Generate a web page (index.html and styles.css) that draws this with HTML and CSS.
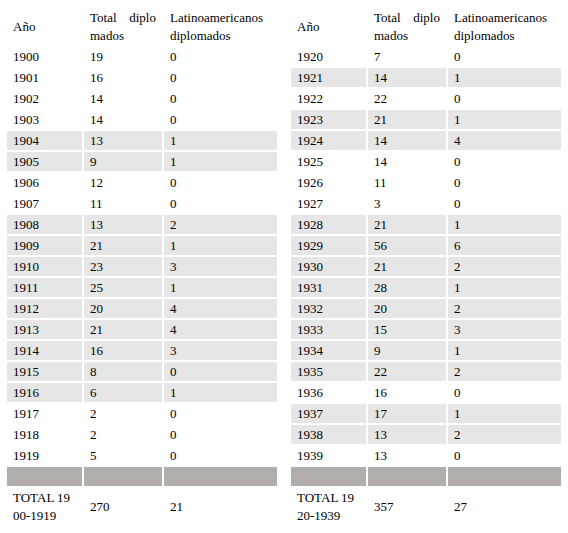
FILE: index.html
```html
<!DOCTYPE html>
<html lang="es">
<head>
<meta charset="utf-8">
<title>Diplomados</title>
<link rel="stylesheet" href="styles.css">
</head>
<body>
<div class="wrap">
  <table class="data">
    <colgroup><col class="c1"><col class="c2"><col class="c3"></colgroup>
    <tr class="head"><td>Año</td><td class="brk">Total diplomados</td><td class="brk">Latinoamericanos diplomados</td></tr>
    <tr><td>1900</td><td>19</td><td>0</td></tr>
    <tr><td>1901</td><td>16</td><td>0</td></tr>
    <tr><td>1902</td><td>14</td><td>0</td></tr>
    <tr><td>1903</td><td>14</td><td>0</td></tr>
    <tr class="shade"><td>1904</td><td>13</td><td>1</td></tr>
    <tr class="shade"><td>1905</td><td>9</td><td>1</td></tr>
    <tr><td>1906</td><td>12</td><td>0</td></tr>
    <tr><td>1907</td><td>11</td><td>0</td></tr>
    <tr class="shade"><td>1908</td><td>13</td><td>2</td></tr>
    <tr class="shade"><td>1909</td><td>21</td><td>1</td></tr>
    <tr class="shade"><td>1910</td><td>23</td><td>3</td></tr>
    <tr class="shade"><td>1911</td><td>25</td><td>1</td></tr>
    <tr class="shade"><td>1912</td><td>20</td><td>4</td></tr>
    <tr class="shade"><td>1913</td><td>21</td><td>4</td></tr>
    <tr class="shade"><td>1914</td><td>16</td><td>3</td></tr>
    <tr class="shade"><td>1915</td><td>8</td><td>0</td></tr>
    <tr class="shade"><td>1916</td><td>6</td><td>1</td></tr>
    <tr><td>1917</td><td>2</td><td>0</td></tr>
    <tr><td>1918</td><td>2</td><td>0</td></tr>
    <tr><td>1919</td><td>5</td><td>0</td></tr>
    <tr class="sep"><td>&nbsp;</td><td>&nbsp;</td><td>&nbsp;</td></tr>
    <tr class="total"><td class="tot">TOTAL 1900-1919</td><td>270</td><td>21</td></tr>
  </table>
  <table class="data">
    <colgroup><col class="c1"><col class="c2"><col class="c3"></colgroup>
    <tr class="head"><td>Año</td><td class="brk">Total diplomados</td><td class="brk">Latinoamericanos diplomados</td></tr>
    <tr><td>1920</td><td>7</td><td>0</td></tr>
    <tr class="shade"><td>1921</td><td>14</td><td>1</td></tr>
    <tr><td>1922</td><td>22</td><td>0</td></tr>
    <tr class="shade"><td>1923</td><td>21</td><td>1</td></tr>
    <tr class="shade"><td>1924</td><td>14</td><td>4</td></tr>
    <tr><td>1925</td><td>14</td><td>0</td></tr>
    <tr><td>1926</td><td>11</td><td>0</td></tr>
    <tr><td>1927</td><td>3</td><td>0</td></tr>
    <tr class="shade"><td>1928</td><td>21</td><td>1</td></tr>
    <tr class="shade"><td>1929</td><td>56</td><td>6</td></tr>
    <tr class="shade"><td>1930</td><td>21</td><td>2</td></tr>
    <tr class="shade"><td>1931</td><td>28</td><td>1</td></tr>
    <tr class="shade"><td>1932</td><td>20</td><td>2</td></tr>
    <tr class="shade"><td>1933</td><td>15</td><td>3</td></tr>
    <tr class="shade"><td>1934</td><td>9</td><td>1</td></tr>
    <tr class="shade"><td>1935</td><td>22</td><td>2</td></tr>
    <tr><td>1936</td><td>16</td><td>0</td></tr>
    <tr class="shade"><td>1937</td><td>17</td><td>1</td></tr>
    <tr class="shade"><td>1938</td><td>13</td><td>2</td></tr>
    <tr><td>1939</td><td>13</td><td>0</td></tr>
    <tr class="sep"><td>&nbsp;</td><td>&nbsp;</td><td>&nbsp;</td></tr>
    <tr class="total"><td class="tot">TOTAL 1920-1939</td><td>357</td><td>27</td></tr>
  </table>
</div>
</body>
</html>
```
FILE: styles.css
```css
html, body {
  margin: 0;
  padding: 0;
  background: #ffffff;
}

body {
  font-family: "Liberation Serif", "Times New Roman", serif;
  font-size: 13px;
  color: #000000;
}

.wrap {
  display: flex;
  gap: 10px;
  padding: 6px 0 0 5px;
}

.data {
  border-collapse: separate;
  border-spacing: 2px;
  table-layout: fixed;
  width: 274px;
}

.c1 { width: 75px; }
.c2 { width: 78px; }
.c3 { width: 113px; }

.data td {
  padding: 1px 6px 0 6px;
  line-height: 18px;
  vertical-align: middle;
  text-align: left;
}

.data .brk {
  word-break: break-all;
  text-align: justify;
}

.data .tot {
  word-break: break-all;
  padding-right: 8px;
}

.data .shade td {
  background: #e6e6e6;
}

.data .sep td {
  background: #b0adab;
}
```
